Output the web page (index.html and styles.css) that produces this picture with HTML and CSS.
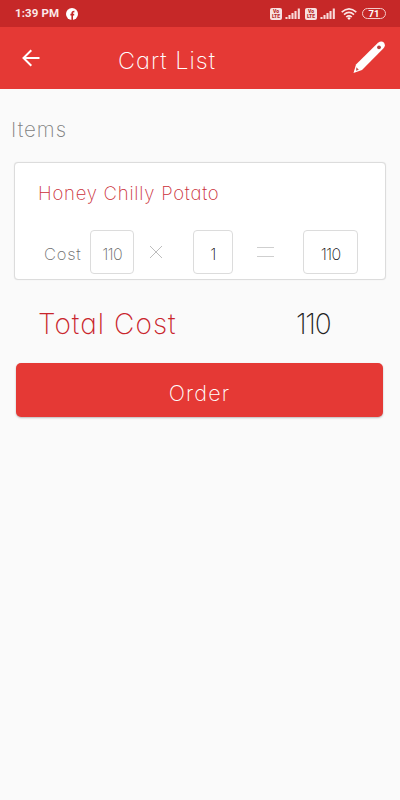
FILE: index.html
```html
<!DOCTYPE html>
<html lang="en">
<head>
<meta charset="utf-8">
<title>Cart List</title>
<link rel="stylesheet" href="styles.css">
</head>
<body>
<div class="status">
  <span class="time">1:39 PM</span>
  <svg class="fb" width="12" height="12" viewBox="0 0 12 12"><circle cx="6" cy="6" r="6" fill="#fff"/><path d="M6.2 12V5Q6.2 3.4 8.4 3.6M4.4 6.6H8.2" fill="none" stroke="#c62828" stroke-width="1.6"/></svg>
  <div class="icons">
    <span class="volte"><b>Vo</b><b>LTE</b></span>
    <svg class="signal" width="16" height="12" viewBox="0 0 16 12"><path d="M1.5 11V9M4.5 11V7M7.5 11V5M10.5 11V3M13.8 11V.5" stroke="#f8dada" stroke-width="2.1"/></svg>
    <span class="volte second"><b>Vo</b><b>LTE</b></span>
    <svg class="signal" width="16" height="12" viewBox="0 0 16 12"><path d="M1.5 11V9M4.5 11V7M7.5 11V5M10.5 11V3M13.8 11V.5" stroke="#f8dada" stroke-width="2.1"/></svg>
    <svg class="wifi" width="16" height="12" viewBox="0 0 16 12"><g fill="none" stroke="#fbe4e4" stroke-width="1.6"><path d="M.7 4.2Q8-2.4 15.3 4.2M3 6.7Q8 2.2 13 6.7M5.2 9Q8 6.6 10.8 9"/></g><path d="M6.2 10Q8 8.6 9.8 10L8 12Z" fill="#fff"/></svg>
    <span class="battery">71</span>
  </div>
</div>
<header class="bar">
  <svg class="back" width="18" height="18" viewBox="0 0 18 18"><path d="M17.5 9H1.5M9.3 1.2 1.5 9l7.8 7.8" fill="none" stroke="#fff" stroke-width="2"/></svg>
  <h1>Cart List</h1>
  <svg class="pencil" width="32" height="33" viewBox="0 0 32 33"><path d="M.5 32 3 23.5 25 1.8Q28.5-.8 31 1.7 33 4.5 30.3 7.6L9 29Z" fill="#fff"/><circle cx="26" cy="6.3" r="1.9" fill="#b5413f"/><path d="m3.4 26.2 2.4 2.6-2.8 1Z" fill="#c8504d"/></svg>
</header>
<main>
  <h2>Items</h2>
  <section class="card">
    <h3>Honey Chilly Potato</h3>
    <div class="row">
      <span class="label">Cost</span>
      <span class="box unit">110</span>
      <svg class="times" width="14" height="14" viewBox="0 0 14 14"><path d="m1 1 12 12M13 1 1 13" stroke="#bdbdbd"/></svg>
      <span class="box qty">1</span>
      <svg class="equals" width="17" height="10" viewBox="0 0 17 10"><path d="M0 .5H17M0 9.5H17" stroke="#cfcfcf"/></svg>
      <span class="box sum">110</span>
    </div>
  </section>
  <div class="total"><span class="name">Total Cost</span><span class="value">110</span></div>
  <button class="order">Order</button>
</main>
</body>
</html>
```
FILE: styles.css
```css
* { box-sizing: border-box; }
body { margin: 0; height: 800px; background: #fafafa; font-family: Inter, Lato, sans-serif; font-weight: 200; font-feature-settings: "cv11"; white-space: nowrap; overflow: hidden; }
h1, h2, h3 { margin: 0; font-weight: 200; }
svg { display: block; flex: none; }
.status { height: 27px; background: #c62828; display: flex; align-items: center; padding: 0 14px 0 15px; color: #fff; }
.time { font: 700 11.5px/27px Roboto, sans-serif; letter-spacing: .1px; width: 51px; color: #fbe9e9; }
.icons { margin-left: auto; display: flex; align-items: center; }
.volte { width: 12px; height: 12px; background: #f8e0e0; border-radius: 2px; color: #b52b2b; font: 700 5px/5px Roboto, sans-serif; padding-top: 1px; text-align: center; }
.volte b { display: block; }
.signal { margin-left: 3px; }
.second { margin-left: 4px; }
.wifi { margin-left: 5px; }
.battery { margin-left: 5px; width: 24px; height: 11px; border: 1px solid #f3caca; border-radius: 6px; text-align: center; font: 700 9.5px/9px Roboto, sans-serif; }
.bar { height: 62px; background: #e53935; display: flex; align-items: flex-start; padding: 0 15px 0 22px; }
.back { margin-top: 22px; }
.bar h1 { margin: 18px 0 0 78px; font-size: 23.5px; line-height: 32px; letter-spacing: 1px; color: #fff; }
.pencil { margin: 14px 0 0 auto; }
main { padding: 0 14px; }
h2 { margin: 26px 0 0 -3px; height: 30px; font-size: 20.5px; line-height: 30px; color: #808080; letter-spacing: 1px; }
.card { margin-top: 17px; width: 372px; height: 118px; background: #fff; border: 1px solid #dcdcdc; border-radius: 4px; padding: 16px 27px 0 24px; box-shadow: 0 0 1px #ddd; }
.card h3 { margin-left: -1px; font-size: 18.5px; line-height: 28px; height: 28px; color: #cb3039; letter-spacing: .77px; }
.row { display: flex; align-items: center; height: 44px; margin-top: 23px; padding-left: 5px; }
.label { width: 46px; font-size: 16.5px; line-height: 44px; color: #707070; padding-top: 3px; letter-spacing: .8px; }
.box { height: 44px; border: 1px solid #dcdcdc; border-radius: 4px; text-align: center; font-size: 16px; line-height: 46px; color: #111; letter-spacing: -.7px; }
.unit { width: 44px; color: #666; }
.times { margin-left: 15px; }
.qty { width: 40px; margin-left: 30px; }
.equals { margin-left: 24px; }
.sum { width: 55px; margin-left: 29px; }
.total { display: flex; align-items: center; height: 40px; margin-top: 24px; padding-left: 24px; font-size: 28px; line-height: 40px; }
.name { width: 258px; color: #c9252c; letter-spacing: 1.05px; }
.value { color: #222; letter-spacing: -1.3px; }
.order { display: block; width: 367px; height: 54px; margin: 19px 0 0 2px; padding: 5px 0 0; border: 0; border-radius: 5px; background: #e53935; box-shadow: 0 1px 2px #bbb; color: #fff; font: 200 21.5px/48px Inter, Lato, sans-serif; letter-spacing: 1.2px; }
```
